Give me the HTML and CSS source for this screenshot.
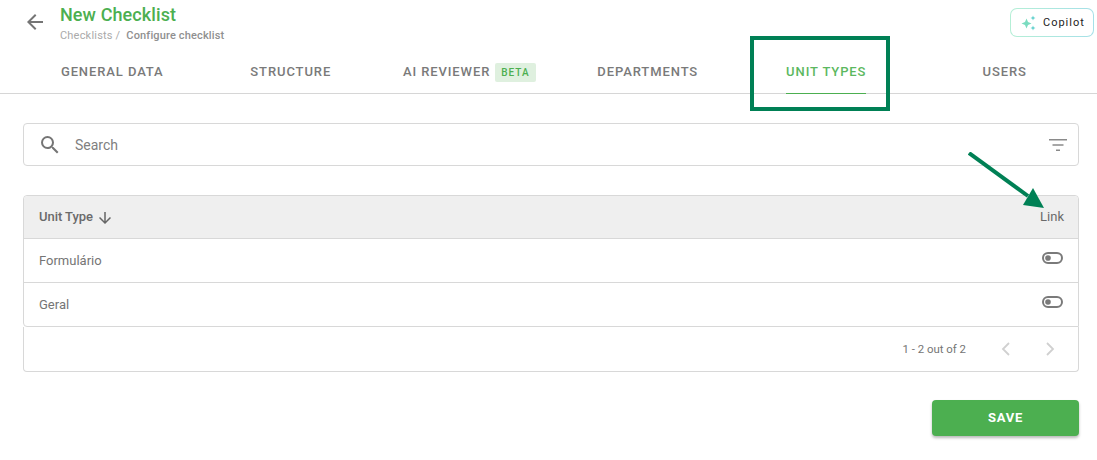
FILE: index.html
```html
<!DOCTYPE html>
<html lang="en">
<head>
<meta charset="utf-8">
<title>New Checklist</title>
<link rel="stylesheet" href="styles.css">
</head>
<body>
<header class="top">
  <button class="back" aria-label="Back">
    <svg width="24" height="24" viewBox="0 0 24 24"><path d="M20 11H7.830l5.590-5.590L12 4l-8 8 8 8 1.410-1.410L7.830 13H20z"/></svg>
  </button>
  <div class="titles">
    <h1>New Checklist</h1>
    <div class="crumbs"><span class="crumb-parent">Checklists /</span><span class="crumb-current">Configure checklist</span></div>
  </div>
  <button class="copilot">
    <svg width="18" height="18" viewBox="0 0 18 18"><path class="spark-a" d="M6.500 4.500 8 8l3.500 1.500L8 11l-1.500 3.500L5 11 1.500 9.500 5 8z"/><path class="spark-b" d="M13 1.500l.7 1.800 1.800.7-1.800.7L13 6.500l-.7-1.800-1.800-.7 1.800-.7zM13 11.500l.7 1.800 1.800.7-1.800.7-.7 1.800-.7-1.800-1.800-.7 1.800-.7z"/></svg>
    <span>Copilot</span>
  </button>
</header>
<nav class="tabs">
  <div class="tab"><span class="tab-label">GENERAL DATA</span></div>
  <div class="tab"><span class="tab-label">STRUCTURE</span></div>
  <div class="tab"><span class="tab-label">AI REVIEWER</span><span class="beta">BETA</span></div>
  <div class="tab"><span class="tab-label">DEPARTMENTS</span></div>
  <div class="tab tab-active"><span class="tab-label">UNIT TYPES</span></div>
  <div class="tab"><span class="tab-label">USERS</span></div>
</nav>
<main class="content">
  <div class="search">
    <svg class="search-icon" width="24" height="24" viewBox="0 0 24 24"><path d="M15.500 14h-.79l-.28-.27A6.470 6.470 0 0 0 16 9.500 6.500 6.500 0 1 0 9.500 16c1.610 0 3.090-.59 4.230-1.570l.27.28v.79l5 4.990L20.490 19l-4.990-5zm-6 0C7.010 14 5 11.990 5 9.500S7.010 5 9.500 5 14 7.010 14 9.500 11.990 14 9.500 14z"/></svg>
    <span class="search-text">Search</span>
    <svg class="filter-icon" width="24" height="24" viewBox="0 0 24 24"><path d="M3 6h18v1.500H3zM6.500 11.200h11v1.500h-11zM10 16.500h4V18h-4z"/></svg>
  </div>
  <div class="table">
    <div class="row head">
      <div class="head-cell">Unit Type
        <svg width="18" height="18" viewBox="0 0 24 24"><path d="M20 12l-1.410-1.410L13 16.170V4h-2v12.170l-5.580-5.590L4 12l8 8 8-8z"/></svg>
      </div>
      <div class="head-link">Link</div>
    </div>
    <div class="row">
      <div>Formulário</div>
      <svg class="toggle" width="22" height="14" viewBox="0 0 22 14"><rect x="2" y="2" width="19" height="10" rx="5"/><circle cx="7" cy="7" r="2.800"/></svg>
    </div>
    <div class="row">
      <div>Geral</div>
      <svg class="toggle" width="22" height="14" viewBox="0 0 22 14"><rect x="2" y="2" width="19" height="10" rx="5"/><circle cx="7" cy="7" r="2.800"/></svg>
    </div>
  </div>
  <div class="pager">
    <span class="pager-text">1 - 2 out of 2</span>
    <svg class="chev" width="24" height="24" viewBox="0 0 24 24"><path d="M15 6l-6 6 6 6"/></svg>
    <svg class="chev" width="24" height="24" viewBox="0 0 24 24"><path d="M9 6l6 6-6 6"/></svg>
  </div>
  <div class="actions"><button class="save">SAVE</button></div>
</main>
<div class="mark-box"></div>
<svg class="mark-arrow" width="90" height="70" viewBox="0 0 90 70"><path class="arrow-line" d="M1 1 L60 44"/><path class="arrow-head" d="M76 56 L55 53 L65 36z"/></svg>
</body>
</html>
```
FILE: styles.css
```css
* { box-sizing: border-box; }
html, body { margin: 0; padding: 0; }
body {
  position: relative;
  width: 1097px;
  height: 460px;
  overflow: hidden;
  background: #fff;
  font-family: Roboto, "Liberation Sans", sans-serif;
  color: #666;
}
button { font-family: inherit; border: 0; background: none; padding: 0; }

.top {
  display: flex;
  align-items: flex-start;
  height: 53px;
  padding: 5px 3px 0 23px;
}
.back { width: 24px; height: 24px; margin-top: 5px; }
.back svg { display: block; fill: #757575; }
.titles { flex: 1; margin-left: 13px; }
h1 {
  margin: 0;
  font-size: 18px;
  line-height: 20px;
  font-weight: 500;
  letter-spacing: 0.1px;
  color: #4caf50;
}
.crumbs { margin-top: 4px; font-size: 11px; line-height: 14px; display: flex; gap: 6px; letter-spacing: 0.2px; }
.crumb-parent { color: #aaa; }
.crumb-current { color: #909090; font-weight: 500; letter-spacing: 0.15px; }
.copilot {
  display: flex;
  align-items: center;
  gap: 5px;
  width: 84px;
  height: 29px;
  margin-top: 3px;
  padding-left: 9px;
  border: 1px solid transparent;
  border-radius: 7px;
  background: linear-gradient(#fff, #fff) padding-box, linear-gradient(90deg, #b5efd6, #a5e0e8) border-box;
  font-size: 11px;
  font-weight: 400;
  letter-spacing: 1px;
  color: #222;
}
.spark-a { fill: #7bdcc0; }
.spark-b { fill: #5fd0cc; }

.tabs {
  display: grid;
  grid-template-columns: repeat(6, 1fr);
  height: 41px;
  padding: 0 3px 0 23px;
  border-bottom: 1px solid #d6d6d6;
}
.tab {
  display: flex;
  justify-content: center;
  align-items: flex-start;
  gap: 5px;
  padding-top: 9px;
}
.tab-label {
  font-size: 13px;
  line-height: 20px;
  font-weight: 500;
  letter-spacing: 0.9px;
  color: #7a7a7a;
  height: 41px;
}
.tab-active .tab-label {
  color: #5cb860;
  border-bottom: 1px solid #4caf50;
  height: 32px;
}
.beta {
  margin-top: 1px;
  padding: 0 6px;
  height: 19px;
  font-size: 10px;
  line-height: 19px;
  font-weight: 500;
  letter-spacing: 1px;
  color: #4caf50;
  background: #dff0df;
  border-radius: 2px;
}

.content { padding: 29px 18px 0 23px; }
.search {
  display: flex;
  align-items: center;
  height: 43px;
  padding: 0 8px 0 14px;
  border: 1px solid #d8d8d8;
  border-radius: 4px;
}
.search-icon { fill: #757575; }
.search-text { flex: 1; margin-left: 13px; font-size: 14px; color: #808080; }
.filter-icon { fill: #8a8a8a; }

.table {
  margin-top: 29px;
  border: 1px solid #d8d8d8;
  border-radius: 4px 4px 0 4px;
  font-size: 13px;
  color: #757575;
}
.row {
  display: flex;
  justify-content: space-between;
  align-items: center;
  height: 44px;
  padding: 0 14px 0 15px;
  border-top: 1px solid #d8d8d8;
}
.row.head {
  height: 42px;
  padding-bottom: 1px;
  border-top: 0;
  background: #efefef;
  border-radius: 4px 4px 0 0;
  color: #6a6a6a;
}
.head-cell { display: flex; align-items: center; gap: 3px; font-weight: 500; letter-spacing: -0.05px; }
.head-cell svg { fill: #666; margin-top: 2px; }
.head-link { font-weight: 400; }
.toggle { margin-top: -5px; margin-right: 1px; }
.toggle rect { fill: #fff; stroke: #7a7a7a; stroke-width: 2; }
.toggle circle { fill: #7a7a7a; }

.pager {
  display: flex;
  justify-content: flex-end;
  align-items: center;
  height: 45px;
  padding-right: 16px;
  border: 1px solid #d8d8d8;
  border-top: 0;
  border-radius: 0 0 4px 4px;
  font-size: 11.400px;
  color: #757575;
}
.pager-text { margin-right: 28px; }
.chev { fill: none; stroke: #d0d0d0; stroke-width: 1.800; margin-left: 20px; }
.chev:first-of-type { margin-left: 0; }

.actions { display: flex; justify-content: flex-end; margin-top: 28px; }
.save {
  width: 147px;
  height: 36px;
  padding-bottom: 1px;
  border-radius: 4px;
  background: #4caf50;
  color: #fff;
  font-size: 13px;
  font-weight: 700;
  letter-spacing: 0.8px;
  box-shadow: 0 2px 3px rgba(0,0,0,.28);
}

.mark-box {
  position: absolute;
  left: 750px;
  top: 36px;
  width: 140px;
  height: 75px;
  border: 4px solid #008055;
}
.mark-arrow { position: absolute; left: 968px; top: 152px; }
.arrow-line { stroke: #008055; stroke-width: 4; fill: none; }
.arrow-head { fill: #008055; }
```
